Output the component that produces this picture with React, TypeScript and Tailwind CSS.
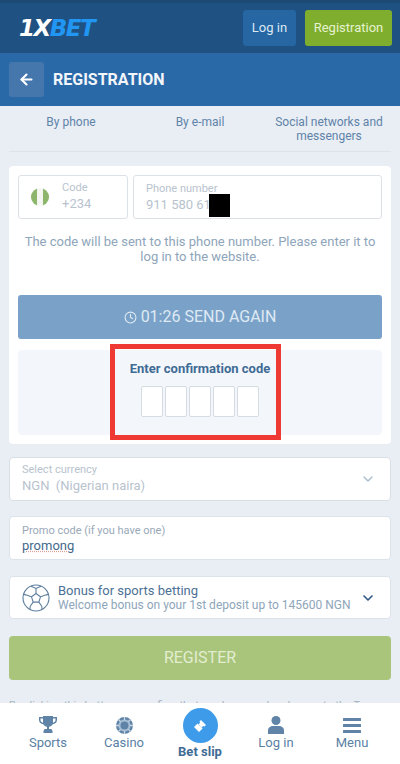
import { ArrowLeft, ChevronDown, Clock } from "lucide-react";

function Tab({ children, className = "" }: { children: React.ReactNode; className?: string }) {
  return <div className={`text-center text-[12px] leading-[14px] text-[#5f83a8] ${className}`}>{children}</div>;
}

function NavItem({ icon, label }: { icon: React.ReactNode; label: string }) {
  return (
    <div className="flex flex-1 flex-col items-center pt-[13px]">
      <div className="flex h-[18px] items-center justify-center">{icon}</div>
      <div className="mt-[1px] text-[13px] leading-[16px] text-[#5a7fa5]">{label}</div>
    </div>
  );
}

export default function App() {
  return (
    <div className="relative h-[764px] w-[400px] overflow-hidden bg-[#e9eef5] font-['Roboto',sans-serif]">
      <header className="flex h-[53px] items-center justify-between border-t-[3px] border-[#1d4a75] bg-[#1f5282] pl-[19px] pr-[8px]">
        <div className="flex items-baseline font-['DejaVu_Sans',sans-serif] text-[23px] font-bold italic leading-none tracking-[-1.5px]">
          <span className="text-white">1X</span>
          <span className="text-[#2196f3]">BET</span>
        </div>
        <div className="flex gap-[9px]">
          <div className="flex h-[36px] w-[53px] items-center justify-center rounded-[3px] bg-[#2566a3] text-[13px] text-[#dfe9f3]">Log in</div>
          <div className="flex h-[36px] w-[87px] items-center justify-center rounded-[3px] bg-[#7fae2e] text-[13px] text-[#e6f2cf]">Registration</div>
        </div>
      </header>
      <div className="flex h-[53px] items-center gap-[9px] bg-[#2a69a8] pl-[9px]">
        <div className="flex h-[35px] w-[35px] items-center justify-center rounded-[3px] bg-[#4577ad]">
          <ArrowLeft size={17} strokeWidth={3} className="text-white" />
        </div>
        <div className="text-[16px] font-bold text-[#f2f6fa]">REGISTRATION</div>
      </div>
      <div className="mx-[9px] flex h-[46px] items-start border-b border-[#dde3eb] pt-[9px]">
        <Tab className="w-[124px]">By phone</Tab>
        <Tab className="w-[134px]">By e-mail</Tab>
        <Tab className="flex-1">Social networks and<br />messengers</Tab>
      </div>
      <main className="mx-[9px] mt-[14px]">
        <section className="rounded-[4px] bg-white px-[9px] pb-[9px] pt-[9px]">
          <div className="flex gap-[5px]">
            <div className="flex h-[44px] w-[110px] items-center rounded-[3px] border border-[#dce1e7] pl-[12px]">
              <div className="flex h-[18px] w-[18px] overflow-hidden rounded-full bg-[#f4f6f1]">
                <span className="w-[6px] bg-[#8db56b]" />
                <span className="w-[6px]" />
                <span className="w-[6px] bg-[#8db56b]" />
              </div>
              <div className="ml-[13px] -translate-y-[1px] text-[#b8c3ce]">
                <div className="text-[11px] leading-[13px]">Code</div>
                <div className="mt-[2px] text-[13px] leading-[15px]">+234</div>
              </div>
            </div>
            <div className="relative h-[44px] flex-1 rounded-[3px] border border-[#dce1e7] pl-[12px] pt-[6px] text-[#b8c3ce]">
              <div className="text-[11px] leading-[13px]">Phone number</div>
              <div className="mt-[2px] text-[13px] leading-[15px]">911 580 61</div>
              <div className="absolute left-[75px] top-[18px] h-[23px] w-[21px] bg-black" />
            </div>
          </div>
          <p className="mt-[15px] text-center text-[13px] leading-[15px] text-[#8ea5ba]">
            The code will be sent to this phone number. Please enter it to log in to the website.
          </p>
          <div className="mt-[31px] flex h-[44px] items-center justify-center gap-[4px] rounded-[3px] bg-[#7aa2c9] text-[16px] text-[#dfe9f3]">
            <Clock size={13} strokeWidth={2} />
            <span>01:26 SEND AGAIN</span>
          </div>
          <div className="mt-[11px] flex h-[85px] flex-col items-center rounded-[4px] bg-[#f3f7fc] pt-[11px]">
            <div className="text-[13px] font-bold leading-[15px] text-[#3f6b94]">Enter confirmation code</div>
            <div className="mt-[10px] flex gap-[2px]">
              {[0, 1, 2, 3, 4].map((i) => (
                <div key={i} className="h-[31px] w-[22px] rounded-[2px] border border-[#d6dce3] bg-white" />
              ))}
            </div>
          </div>
        </section>
        <div className="mt-[13px] flex h-[44px] items-center justify-between rounded-[4px] border border-[#d9dfe7] bg-white pl-[12px] pr-[14px] text-[#b8c3ce]">
          <div className="-translate-y-[1px]">
            <div className="text-[11px] leading-[13px]">Select currency</div>
            <div className="mt-[2px] text-[13px] leading-[15px]">NGN&nbsp; (Nigerian naira)</div>
          </div>
          <ChevronDown size={16} className="text-[#a9bccd]" />
        </div>
        <div className="mt-[15px] h-[44px] rounded-[4px] border border-[#dde3ea] bg-white pl-[12px] pt-[7px]">
          <div className="text-[11px] leading-[13px] text-[#9aa9b8]">Promo code (if you have one)</div>
          <div className="mt-[1px] text-[13px] leading-[15px] text-[#45698c] underline decoration-dotted decoration-[#d9a0a0]">promong</div>
        </div>
        <div className="mt-[16px] flex h-[43px] items-center rounded-[4px] border border-[#dde3ea] bg-white pl-[12px] pr-[14px]">
          <svg width="28" height="28" viewBox="0 0 28 28" fill="none" stroke="#5f7f9e" strokeWidth="1.1" className="shrink-0">
            <circle cx="14" cy="14" r="13" />
            <path d="M14 9.500l4.500 3.300-1.700 5.300h-5.600l-1.700-5.300z" />
            <path d="M14 9.500V4.500M18.500 12.800l5-1.700M16.800 18.100l3 4.200M11.200 18.100l-3 4.200M9.500 12.800l-5-1.700" />
            <path d="M9 2.200l5 2.300 5-2.300M23.500 11.100l3.400-1M19.800 22.300l.2 3.400M8.200 22.300l-.2 3.400M4.500 11.100l-3.400-1" />
          </svg>
          <div className="ml-[8px] flex-1">
            <div className="text-[13px] leading-[15px] text-[#4c7196]">Bonus for sports betting</div>
            <div className="text-[12px] leading-[15px] text-[#8ea5ba]">Welcome bonus on your 1st deposit up to 145600 NGN</div>
          </div>
          <ChevronDown size={16} strokeWidth={2.5} className="shrink-0 text-[#2f5a85]" />
        </div>
        <div className="mt-[17px] flex h-[44px] items-center justify-center rounded-[4px] bg-[#a9c57c] text-[16px] text-[#e3edd0]">REGISTER</div>
        <p className="mt-[19px] whitespace-nowrap text-[11px] leading-[14px] text-[#a5b1bd]">By clicking this button you confirm that you have read and agree to the T</p>
      </main>
      <nav className="absolute inset-x-0 bottom-0 flex h-[61px] bg-white px-[10px]">
        <NavItem
          label="Sports"
          icon={
            <svg width="18" height="18" viewBox="0 0 18 18" fill="#5f84a8">
              <path d="M4 0h10v1h4v3c0 2.500-2 4-4.300 4.300C12.900 9.700 11.500 10.500 10 10.800V13h2.500l1 2v2h-9v-2l1-2H8v-2.200C6.500 10.500 5.100 9.700 4.300 8.300 2 8 0 6.500 0 4V1h4zM1.500 2.500V4c0 1.300 1 2.300 2.500 2.700V2.500zm15 0H14v4.200c1.500-.4 2.500-1.400 2.500-2.700z" />
            </svg>
          }
        />
        <NavItem
          label="Casino"
          icon={
            <svg width="17" height="17" viewBox="0 0 17 17">
              <circle cx="8.500" cy="8.500" r="8.500" fill="#5f84a8" />
              <circle cx="8.500" cy="8.500" r="6" fill="#a9c0d6" />
              <circle cx="8.500" cy="8.500" r="4" fill="#5f84a8" />
              <path d="M8.500 0v3M8.500 14v3M0 8.500h3M14 8.500h3M2.500 2.500l2 2M12.500 12.500l2 2M14.500 2.500l-2 2M4.500 12.500l-2 2" stroke="#c9d7e4" strokeWidth="1.300" />
            </svg>
          }
        />
        <div className="flex flex-1 flex-col items-center pt-[5px]">
          <div className="flex h-[35px] w-[35px] items-center justify-center rounded-full bg-[#3d9be9]">
            <svg width="18" height="18" viewBox="0 0 18 18">
              <path d="M10 3l5 5-1.500 1.500a1.400 1.400 0 0 0-2 2L8 15l-5-5 3.500-3.500a1.400 1.400 0 0 0 2-2z" fill="#fff" />
              <path d="M7 7l4 4" stroke="#3d9be9" strokeWidth=".7" strokeDasharray="1 1" />
            </svg>
          </div>
          <div className="mt-[1px] text-[13px] font-bold leading-[16px] text-[#3f6b94]">Bet slip</div>
        </div>
        <NavItem
          label="Log in"
          icon={
            <svg width="16" height="18" viewBox="0 0 16 18" fill="#5f84a8">
              <circle cx="8" cy="4.500" r="4.500" />
              <path d="M0 18v-3.500C0 11.500 2.500 10 5 10h6c2.500 0 5 1.500 5 4.500V18z" />
            </svg>
          }
        />
        <NavItem
          label="Menu"
          icon={
            <svg width="18" height="15" viewBox="0 0 18 15" fill="#5f84a8">
              <rect width="18" height="3" rx=".5" />
              <rect y="6" width="18" height="3" rx=".5" />
              <rect y="12" width="18" height="3" rx=".5" />
            </svg>
          }
        />
      </nav>
      <div className="absolute left-[110px] top-[344px] h-[96px] w-[171px] border-[5px] border-[#ee3a33]" />
    </div>
  );
}
